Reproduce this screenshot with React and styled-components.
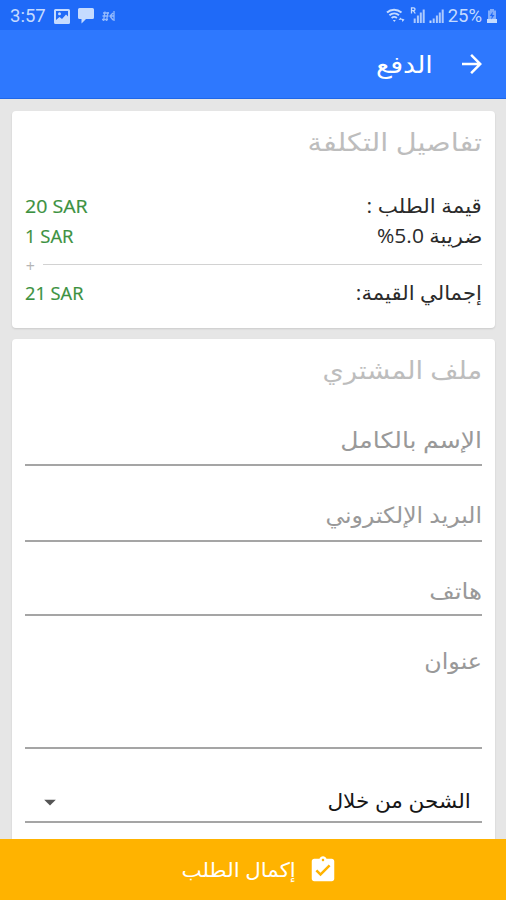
import styled, { createGlobalStyle } from 'styled-components';
import {
    MdArrowForward,
    MdArrowDropDown,
    MdAssignmentTurnedIn,
} from 'react-icons/md';

// --- STYLES ---
const GlobalStyle = createGlobalStyle`
  * {
    box-sizing: border-box;
  }

  body {
    margin: 0;
    font-family: 'Open Sans', 'DejaVu Sans', sans-serif;
  }
`;

const Screen = styled.div`
  width: 506px;
  height: 900px;
  display: flex;
  flex-direction: column;
  overflow: hidden;
  background-color: #e6e6e6;
`;

const StatusBar = styled.div`
  height: 30px;
  flex-shrink: 0;
  padding: 2px 8px 0 10px;
  display: flex;
  justify-content: space-between;
  align-items: center;
  background-color: #1f6af8;
  color: #c5dbff;
  font-family: Roboto, sans-serif;
  font-size: 18.5px;
  line-height: 28px;
`;

const StatusGroup = styled.div`
  height: 28px;
  display: flex;
  align-items: center;
  gap: ${(props) => props.$gap}px;

  svg {
    display: block;
    flex-shrink: 0;
  }
`;

const Toolbar = styled.header`
  height: 69px;
  flex-shrink: 0;
  padding: 0 19px;
  display: flex;
  align-items: center;
  gap: 24px;
  background-color: #2e78fe;
  border-bottom: 1px solid #2067e8;
  color: #fff;

  svg {
    display: block;
  }
`;

/* Arabic text line, widened horizontally from its right edge */
const Text = styled.span`
  display: block;
  color: ${(props) => props.$color || '#2b2b2b'};
  font-size: ${(props) => props.$size || 20}px;
  line-height: 30px;
  white-space: nowrap;
  transform: scaleX(${(props) => props.$stretch || 1});
  transform-origin: right center;
`;

const Content = styled.main`
  flex: 1;
  min-height: 0;
  padding: 12px 11px 0 12px;
  display: flex;
  flex-direction: column;
  gap: 11px;
  overflow: hidden;
`;

const Card = styled.section`
  flex-shrink: 0;
  height: ${(props) => props.$height}px;
  padding: 15px 13px 0 13px;
  background-color: #fff;
  border-radius: 4px;
  box-shadow: 0 1px 2px rgba(0, 0, 0, 0.12);
`;

const CardTitle = styled.div`
  height: 30px;
`;

const CostList = styled.div`
  padding-top: 35px;
`;

const CostRow = styled.div`
  height: 30px;
  display: flex;
  justify-content: space-between;
`;

const Amount = styled.span`
  direction: ltr;
  color: #3b9140;
  font-size: 19px;
  -webkit-text-stroke: 0.2px #3b9140;
  line-height: 30px;
  transform: scaleX(${(props) => props.$stretch});
  transform-origin: left center;
`;

const SumLine = styled.div`
  height: 27px;
  display: flex;
  align-items: center;
  gap: 8px;

  &::before {
    content: '';
    flex: 1;
    height: 1px;
    background-color: #d2d2d2;
  }
`;

const PlusSign = styled.span`
  width: 10px;
  padding-top: 3px;
  color: #b5b5b5;
  font-size: 16px;
  line-height: 24px;
`;

const Field = styled.div`
  height: ${(props) => props.$height}px;
  padding-top: ${(props) => props.$top}px;
  border-bottom: 2px solid #a5a5a5;
`;

const SelectField = styled(Field)`
  padding-left: 11px;
  padding-right: 11px;
  display: flex;
  justify-content: space-between;
  color: #555;

  svg {
    display: block;
    margin-top: 2px;
  }
`;

const SubmitBar = styled.footer`
  height: 61px;
  flex-shrink: 0;
  padding-right: 168px;
  display: flex;
  align-items: center;
  gap: 12px;
  background-color: #ffb300;
  color: #fff;

  svg {
    display: block;
    flex-shrink: 0;
  }
`;

// --- DATA ---
const costs = [
    { label: 'قيمة الطلب :', amount: '20 SAR', labelStretch: 1.07, stretch: 1.03 },
    { label: 'ضريبة 5.0%', amount: '1 SAR', labelStretch: 1.05, stretch: 0.97 },
];

const fields = [
    { label: 'الإسم بالكامل', height: 82, top: 40, stretch: 1.14 },
    { label: 'البريد الإلكتروني', height: 76, top: 33, stretch: 1.07 },
    { label: 'هاتف', height: 74, top: 33, stretch: 1.12 },
    { label: 'عنوان', height: 133, top: 29, stretch: 1.08 },
];

// --- ICONS ---
const PictureIcon = () => (
    <svg width="16" height="15" viewBox="0 0 16 15">
        <path d="M1.500 0h13q1.500 0 1.500 1.500v12q0 1.500-1.500 1.500h-13Q0 15 0 13.500v-12Q0 0 1.500 0zM2 2v9l3.500-3 2.500 2L12 5.500l2 2V2z" fill="currentColor" fillRule="evenodd" />
        <circle cx="5.500" cy="4.800" r="1.500" fill="currentColor" />
    </svg>
);

const ChatIcon = () => (
    <svg width="16" height="16" viewBox="0 0 16 16" fill="currentColor">
        <path d="M1.500 0h13q1.500 0 1.500 1.500v8q0 1.500-1.500 1.500H8l-4.500 4.500V11h-2Q0 11 0 9.500v-8Q0 0 1.500 0z" />
    </svg>
);

const NoticeIcon = () => (
    <svg width="13" height="12" viewBox="0 0 13 12" fill="none" stroke="currentColor" strokeWidth="1.300" opacity="0.7">
        <path d="M1 3h6M.5 6h6M0 9.500h6M3 1.500L1.500 11M6 2L4.500 11M12 1v10M7.500 6.500L11 3M8 6l3 4M9 6h3" />
    </svg>
);

const WifiIcon = () => (
    <svg width="20" height="16" viewBox="0 0 20 16" fill="none" stroke="currentColor">
        <path d="M1 4.500C5 .8 11 .8 15.500 4.500" strokeWidth="2" />
        <path d="M3.400 7.300C6.300 4.800 10.200 4.800 13 7.300" strokeWidth="1.900" />
        <path d="M5.600 10C7.300 8.600 9.200 8.600 10.900 10" strokeWidth="1.800" />
        <path d="M6.800 12h3L8.300 14z" fill="currentColor" stroke="none" />
        <path d="M12.500 12l2-2.500 1.500 2zM15.500 10.500l3 1-2 2.500z" fill="currentColor" stroke="none" />
    </svg>
);

const SignalIcon = ({ roaming }) => (
    <svg width="15" height="18" viewBox="0 0 15 18" fill="currentColor">
        {roaming ? (
            <path d="M1.500 6.500V.8h2q1.500 0 1.500 1.400t-1.500 1.400h-2M3.300 3.600l2 2.900" fill="none" stroke="currentColor" strokeWidth="1.300" />
        ) : (
            <path d="M.5 13.500h2V16h-2z" />
        )}
        <path d="M3.700 11.500h2V16h-2zM6.900 8.500h2V16h-2zM9.800 5.500h2V16h-2zM12.700 2.500h2V16h-2z" opacity="0.85" />
    </svg>
);

const BatteryIcon = () => (
    <svg width="12" height="16" viewBox="0 0 12 16">
        <path d="M4 1h4v1.500h2V11H2V2.500h2z" fill="currentColor" opacity="0.6" />
        <path d="M1 11h10v4H1z" fill="currentColor" />
        <path d="M6.800 3.500L3.800 8h2l-.6 3.500L8.500 7H6.400z" fill="#1f6af8" />
    </svg>
);

// --- COMPONENT ---
export default function App() {
    return (
        <>
            <GlobalStyle />
            <Screen dir="rtl">
                <StatusBar dir="ltr">
                    <StatusGroup $gap={8}>
                        <span>3:57</span>
                        <PictureIcon />
                        <ChatIcon />
                        <NoticeIcon />
                    </StatusGroup>
                    <StatusGroup $gap={4}>
                        <WifiIcon />
                        <SignalIcon roaming />
                        <SignalIcon />
                        <span>25%</span>
                        <BatteryIcon />
                    </StatusGroup>
                </StatusBar>

                <Toolbar>
                    {/* The back arrow points to the right in RTL */}
                    <MdArrowForward size={30} />
                    <Text $size={24} $color="#fff" $stretch={1.12}>الدفع</Text>
                </Toolbar>

                <Content>
                    <Card $height={217}>
                        <CardTitle>
                            <Text $size={25} $color="#bdbdbd" $stretch={1.15}>تفاصيل التكلفة</Text>
                        </CardTitle>
                        <CostList>
                            {costs.map((cost) => (
                                <CostRow key={cost.label}>
                                    <Text $stretch={cost.labelStretch}>{cost.label}</Text>
                                    <Amount $stretch={cost.stretch}>{cost.amount}</Amount>
                                </CostRow>
                            ))}
                            <SumLine>
                                <PlusSign>+</PlusSign>
                            </SumLine>
                            <CostRow>
                                <Text $stretch={1.06}>إجمالي القيمة:</Text>
                                <Amount $stretch={0.96}>21 SAR</Amount>
                            </CostRow>
                        </CostList>
                    </Card>

                    <Card $height={520}>
                        <CardTitle>
                            <Text $size={25} $color="#bdbdbd" $stretch={1.09}>ملف المشتري</Text>
                        </CardTitle>
                        {fields.map((field) => (
                            <Field key={field.label} $height={field.height} $top={field.top}>
                                <Text $size={22} $color="#999" $stretch={field.stretch}>{field.label}</Text>
                            </Field>
                        ))}
                        <SelectField $height={74} $top={37}>
                            <Text $color="#151515" $stretch={1.08}>الشحن من خلال</Text>
                            <MdArrowDropDown size={28} />
                        </SelectField>
                    </Card>
                </Content>

                <SubmitBar>
                    <MdAssignmentTurnedIn size={30} />
                    <Text $color="#fff" $stretch={1.07}>إكمال الطلب</Text>
                </SubmitBar>
            </Screen>
        </>
    );
}
